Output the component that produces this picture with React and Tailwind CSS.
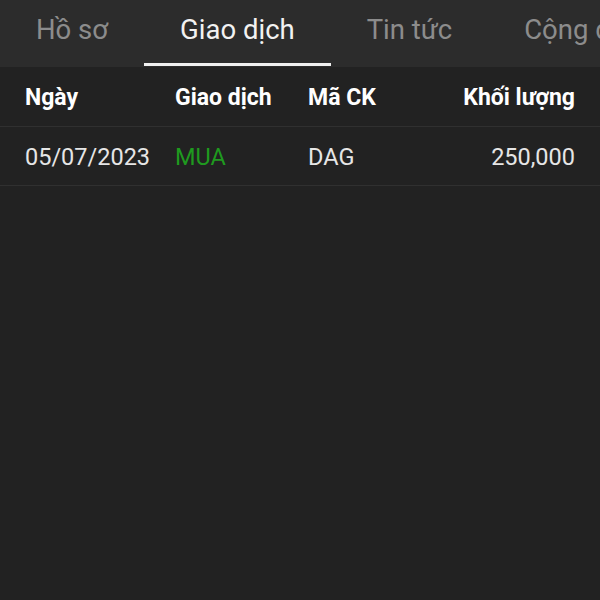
import React from 'react';

const tabs = ['Hồ sơ', 'Giao dịch', 'Tin tức', 'Cộng đồng'];

const rows = [{ date: '05/07/2023', side: 'MUA', code: 'DAG', qty: '250,000' }];

function App() {
  return (
    <div className="w-[600px] h-[600px] overflow-hidden bg-[#222222] font-['Roboto',sans-serif]">
      <div className="h-[67px] bg-[#2c2c2c] flex whitespace-nowrap">
        {tabs.map((t, i) => (
          <div
            key={t}
            className={
              i === 1
                ? 'relative px-9 flex items-center pb-[8px] text-[27.5px] text-[#f2f2f2]'
                : 'relative px-9 flex items-center pb-[8px] text-[27.5px] text-[#8c8c8c]'
            }
          >
            {t}
            {i === 1 && <div className="absolute left-0 right-0 bottom-[1px] h-[3px] bg-[#f0f0f0]" />}
          </div>
        ))}
      </div>

      <div className="grid grid-cols-[150px_133px_1fr_auto] px-[25px] pt-[3px] h-[60px] items-center border-b border-[#303030] text-[23px] font-bold text-white">
        <div>Ngày</div>
        <div>Giao dịch</div>
        <div>Mã CK</div>
        <div className="text-right">Khối lượng</div>
      </div>

      {rows.map((r) => (
        <div
          key={r.date}
          className="grid grid-cols-[150px_133px_1fr_auto] px-[25px] pt-[3px] h-[59px] items-center border-b border-[#303030] text-[23.5px] text-[#e6e6e6]"
        >
          <div>{r.date}</div>
          <div className="text-[#1f9a1f]">{r.side}</div>
          <div>{r.code}</div>
          <div className="text-right">{r.qty}</div>
        </div>
      ))}
    </div>
  );
}

export default App;
